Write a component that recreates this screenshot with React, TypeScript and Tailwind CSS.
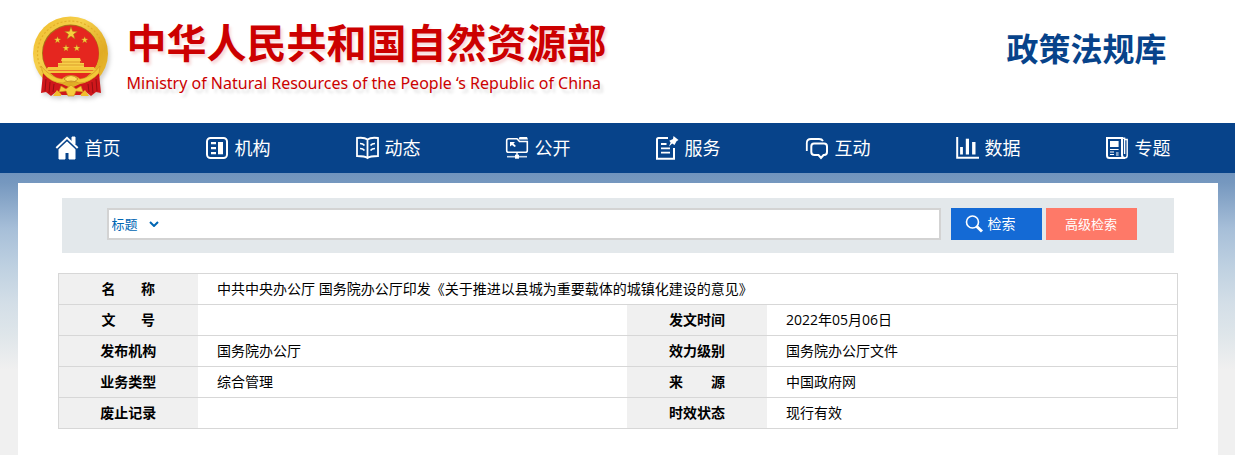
import { useState } from 'react';
import type { ReactNode } from 'react';

const STAR = 'M0 -10 L2.4 -3.2 L9.5 -3.1 L3.8 1.2 L5.9 8.1 L0 4 L-5.9 8.1 L-3.8 1.2 L-9.5 -3.1 L-2.4 -3.2 Z';

const navItems: { label: string; icon: ReactNode }[] = [
  {
    label: '首页',
    icon: (
      <>
        <path d="M12 5 L20 13 V23 H14 V16.5 H10 V23 H4 V13 Z" fill="currentColor" />
        <path d="M17 1 H20 V8 L17 5 Z" fill="currentColor" />
        <path d="M1.3 12 L12 1.8 L22.7 12" strokeWidth="2" />
        <path d="M3.5 12.8 L12 4.8 L20.5 12.8" stroke="#07438a" strokeWidth="1" />
      </>
    ),
  },
  {
    label: '机构',
    icon: (
      <>
        <rect x="2" y="2" width="20" height="20" rx="3.5" strokeWidth="2" />
        <path d="M6 7.2 H11 M6 12.2 H11 M6 17.2 H11" strokeWidth="2.2" />
        <rect x="13" y="6" width="5" height="12.3" fill="currentColor" stroke="none" />
      </>
    ),
  },
  {
    label: '动态',
    icon: (
      <>
        <path d="M12.5 3.5 C10 1.6 5 1.6 2 2 V20 C6 20 10 20 12.5 22 C15 20 19 20 23 20 V2 C20 1.6 15 1.6 12.5 3.5 V22" strokeWidth="1.8" />
        <path d="M5 7.5 Q8 7.5 9.5 9.5 M5 12.5 Q8 12.5 9.5 14.5 M20 7.5 Q17 7.5 15.5 9.5 M20 12.5 Q17 12.5 15.5 14.5" strokeWidth="1.7" />
      </>
    ),
  },
  {
    label: '公开',
    icon: (
      <>
        <path d="M12 2.8 H3.5 Q1.7 2.8 1.7 4.6 V14.4 Q1.7 16.2 3.5 16.2 H20.5 Q22.3 16.2 22.3 14.4 V5.5 H14.5 Z" strokeWidth="1.6" />
        <path d="M14.5 1 H22 L23 3.5 H13.5 Z" fill="currentColor" stroke="none" />
        <path d="M5 6 H10 L8.5 7.5 L11 10 L9.5 11 L7 9 L5 10.5 Z" fill="currentColor" stroke="none" />
        <path d="M2 20.7 H22" strokeWidth="1.6" opacity="0.8" />
        <path d="M12 16 V19" strokeWidth="1.5" />
        <rect x="10" y="18.7" width="4" height="4" fill="currentColor" stroke="none" />
      </>
    ),
  },
  {
    label: '服务',
    icon: (
      <>
        <path d="M13 2 H3.5 Q2 2 2 3.5 V22.7 H19 V12" strokeWidth="2" />
        <path d="M6 8 H11.5 M6 12.3 H15 M6 16.7 H15" strokeWidth="1.8" />
        <path d="M18.5 0 L23.5 4 L21.5 5.2 L19.5 9 L17.2 7.5 L14 10.5 L15.6 6.5 L14.3 4.8 L18 3 Z" fill="currentColor" stroke="none" />
      </>
    ),
  },
  {
    label: '互动',
    icon: (
      <>
        <path d="M1.8 15 V7 Q1.8 3 6 3 H14 Q17 3 18 5" strokeWidth="1.8" />
        <path d="M9 7.5 H19 Q22 7.5 22 10.5 V16 Q22 19 19 19 H18.5 L16 22 L13.5 19 H9.5 Q6.3 19 6.3 16 V10.5 Q6.3 7.5 9 7.5 Z" strokeWidth="2" />
      </>
    ),
  },
  {
    label: '数据',
    icon: (
      <>
        <path d="M2.2 1 V21.8 H24" strokeWidth="2" />
        <path d="M6.5 11 V18.5" strokeWidth="2.8" />
        <path d="M12.4 2.7 V18.5" strokeWidth="3.2" />
        <path d="M18.8 6 V18.5" strokeWidth="3.4" />
      </>
    ),
  },
  {
    label: '专题',
    icon: (
      <>
        <path d="M2 2 H17 V19 Q17 22 20 22 H4.5 Q2 22 2 19.5 Z" strokeWidth="2" />
        <path d="M17 2.2 H19.6 V18 M19.6 3.5 H22.2 V19.5 Q22.2 22 19.5 22" strokeWidth="1.4" />
        <rect x="5" y="5" width="8.6" height="6" fill="currentColor" stroke="none" />
        <path d="M5 13.5 H13.6 M5 16 H9 M5 18.5 H9 M11 17 H13.6 M11 19 H13.6" strokeWidth="1.2" />
      </>
    ),
  },
];

const details = [
  [{ name: '文\u00a0\u00a0\u00a0\u00a0\u00a0\u00a0\u00a0号', value: '' }, { name: '发文时间', value: '2022年05月06日' }],
  [{ name: '发布机构', value: '国务院办公厅' }, { name: '效力级别', value: '国务院办公厅文件' }],
  [{ name: '业务类型', value: '综合管理' }, { name: '来\u3000\u3000源', value: '中国政府网' }],
  [{ name: '废止记录', value: '' }, { name: '时效状态', value: '现行有效' }],
];

function Emblem() {
  return (
    <svg viewBox="0 0 90 95" className="h-[95px] w-[90px] drop-shadow-[2px_3px_2px_rgba(0,0,0,0.18)]" aria-hidden="true">
      <defs>
        <linearGradient id="gold" x1="0" y1="0" x2="1" y2="1">
          <stop offset="0" stopColor="#eeb926" />
          <stop offset="0.35" stopColor="#f6d04c" />
          <stop offset="0.7" stopColor="#e0ab24" />
          <stop offset="1" stopColor="#efc136" />
        </linearGradient>
      </defs>
      <ellipse cx="44.5" cy="43.5" rx="37.5" ry="37" fill="url(#gold)" />
      <ellipse cx="44.5" cy="43.5" rx="33" ry="32.5" fill="none" stroke="#e2ae28" strokeWidth="1.2" strokeDasharray="2 2" />
      <circle cx="44.5" cy="43" r="28.5" fill="#a87417" />
      <circle cx="44.8" cy="43.5" r="28" fill="#e5261f" />
      <g fill="#f7cf3d" stroke="#a96516" strokeWidth="0.8">
        <path d={STAR} transform="translate(45 23.5) scale(.68)" />
        <path d={STAR} transform="translate(31.5 30) scale(.36)" />
        <path d={STAR} transform="translate(58.7 30) scale(.36)" />
        <path d={STAR} transform="translate(40 38.2) scale(.36)" />
        <path d={STAR} transform="translate(50.8 38.2) scale(.36)" />
      </g>
      <path d="M36 48 H54 L55 51 H35 Z M36 51 H54 V53 H58 V60 H32 V53 H36 Z" fill="#f8d04a" />
      <path d="M34 52 H56 M32 55 H58" stroke="#d08a1c" strokeWidth="0.7" />
      <path d="M22 57 H68 L70 60 H20 Z M20 60.5 H70 L67 63 H23 Z" fill="#f4c63d" />
      {/* Red drapery under the wreath */}
      <path d="M17 63 Q25 72 36 74 L45 78 L54 74 Q65 72 73 63 L75 83 L70 82 L65 86 L60 82 L54 85 H36 L30 82 L25 86 L20 82 L15 83 Z" fill="#cf171b" />
      <path d="M20 69 L19 81 M24 72 L23 83 M28 74 L27 82 M70 69 L71 81 M66 72 L67 83 M62 74 L63 82" stroke="#8f0d11" strokeWidth="0.9" />
      <path d="M15 56 Q25 68 36 69 Q40 65 45 65.500 Q50 65 54 69 Q65 68 74 56 L73 63 Q64 73 53 73 Q49 70 45 72 Q41 70 37 73 Q25 73 17 63 Z" fill="#f3c838" stroke="#c98c1e" strokeWidth="0.5" />
      <path d="M38 69 Q45 62 52 69 Q49 73 45 71 Q41 73 38 69 Z" fill="#ffdc5d" stroke="#b87917" strokeWidth="0.7" />
      <path d="M35 76 L40 79 L45 75 L50 79 L55 76 L57 82 L50 81 L48 86 H42 L40 81 L33 82 Z" fill="#f6cc3c" stroke="#c78c1a" strokeWidth="0.6" />
      <path d="M27 86 L31 80 L35 84 V86 Z M63 86 L59 80 L55 84 V86 Z" fill="#f1bd2d" />
    </svg>
  );
}

function NameCell({ children }: { children: ReactNode }) {
  return <th scope="row" className="bg-[#f0f0f0] text-center font-bold">{children}</th>;
}

export default function App() {
  const [field, setField] = useState('title');
  const [keyword, setKeyword] = useState('');

  return (
    <div className="flex min-h-screen flex-col bg-white font-['Open_Sans','Noto_Sans_CJK_SC',sans-serif] text-sm text-black">
      {/* Header */}
      <header className="mx-auto flex h-[123px] w-full max-w-[1200px] items-start justify-between pr-[51px] pl-2">
        <div className="flex items-start gap-[11px] pt-[10px]">
          <Emblem />
          <div className="text-[#cc0000]">
            <h1 className="mt-[7px] text-[40px] leading-[52px] font-bold [text-shadow:2px_3px_3px_rgba(204,0,0,0.15)]">
              中华人民共和国自然资源部
            </h1>
            <p className="font-['Noto_Sans',sans-serif] text-base leading-7 [text-shadow:3px_4px_3px_rgba(0,0,0,0.13)]">
              Ministry of Natural Resources of the People ‘s Republic of China
            </p>
          </div>
        </div>
        <h2 className="pt-[25px] text-[32px] leading-[48px] font-bold text-[#07438a]">政策法规库</h2>
      </header>

      {/* Main navigation */}
      <nav className="bg-[#07438a]">
        <div className="mx-auto grid max-w-[1200px] grid-cols-8">
          {navItems.map((item) => (
            <a key={item.label} href="#" className="flex h-[50px] items-center gap-[6px] pl-[37px] text-lg text-white">
              <svg viewBox="0 0 24 24" className="size-6" fill="none" stroke="currentColor" aria-hidden="true">
                {item.icon}
              </svg>
              {item.label}
            </a>
          ))}
        </div>
      </nav>

      <div className="flex flex-1 flex-col bg-[#f0f0f0] bg-[linear-gradient(#7094be,#7698bf_10px,#a6bed8_55px,#bccfe0_90px,#d3dee7_130px,#dfe6ea_163px,#f0f0f0_197px)] pt-[10px]">
        <main className="mx-auto w-full max-w-[1200px] flex-1 bg-white px-10 pt-[15px] pb-[25px]">
          {/* Search */}
          <form className="mx-1 flex h-[55px] items-start bg-[#e3e8eb] pt-[10px] pr-[37px] pl-[45px]" onSubmit={(e) => e.preventDefault()}>
            <div className="flex h-8 flex-1 items-center border-2 border-[#d3d3d3] bg-white">
              <div className="relative flex items-center">
                <select
                  aria-label="检索字段"
                  value={field}
                  onChange={(e) => setField(e.target.value)}
                  className="w-14 appearance-none bg-transparent pl-[3px] text-[13px] text-[#0066b3] outline-none"
                >
                  <option value="title">标题</option>
                  <option value="content">正文</option>
                </select>
                <svg viewBox="0 0 10 6" className="pointer-events-none absolute right-[6px] h-[6px] w-[10px]" fill="none" stroke="#0066b3" strokeWidth="2" aria-hidden="true">
                  <path d="M1 1 L5 5 L9 1" />
                </svg>
              </div>
              <input
                type="text"
                aria-label="检索词"
                value={keyword}
                onChange={(e) => setKeyword(e.target.value)}
                className="h-full min-w-0 flex-1 px-2 outline-none"
              />
            </div>
            <button type="submit" className="ml-[10px] flex h-8 w-[91px] items-center gap-[5px] bg-[#146ad5] pl-[14px] text-sm text-white">
              <svg viewBox="0 0 18 18" className="size-[18px]" fill="none" stroke="currentColor" aria-hidden="true">
                <circle cx="7.5" cy="7" r="6" strokeWidth="1.6" />
                <path d="M11.8 11.5 L17 16.5" strokeWidth="3" />
              </svg>
              检索
            </button>
            <button type="button" className="ml-1 h-8 w-[91px] bg-[#fe7968] text-[13px] text-white">高级检索</button>
          </form>

          {/* Document details */}
          <table className="mt-5 w-full table-fixed border-collapse border border-[#d7d7d7]">
            <colgroup>
              <col className="w-[140px]" />
              <col />
              <col className="w-[140px]" />
              <col className="w-[410px]" />
            </colgroup>
            <tbody>
              <tr className="h-[31px] border-b border-[#d7d7d7]">
                <NameCell>{'名\u00a0\u00a0\u00a0\u00a0\u00a0\u00a0\u00a0称'}</NameCell>
                <td colSpan={3} className="pl-[19px]">
                  中共中央办公厅 国务院办公厅印发《关于推进以县城为重要载体的城镇化建设的意见》
                </td>
              </tr>
              {details.map(([left, right]) => (
                <tr key={left.name} className="h-[31px] border-b border-[#d7d7d7]">
                  <NameCell>{left.name}</NameCell>
                  <td className="pl-[19px]">{left.value}</td>
                  <NameCell>{right.name}</NameCell>
                  <td className="pl-[19px]">{right.value}</td>
                </tr>
              ))}
            </tbody>
          </table>
        </main>
      </div>
    </div>
  );
}
